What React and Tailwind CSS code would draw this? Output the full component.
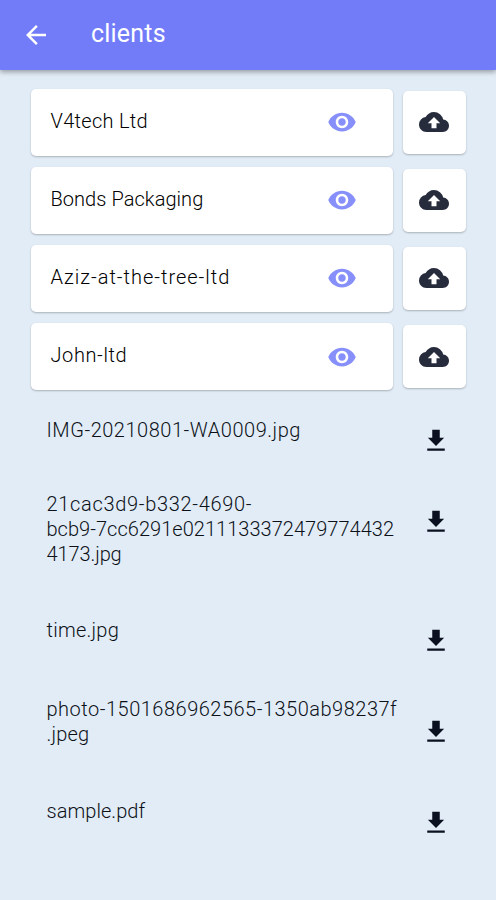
/**
 * Clients screen
 * Lists the clients with view / upload actions and the files of the open client
 */
import React from "react";
import { MdArrowBack, MdCloudUpload, MdVisibility } from "react-icons/md";

const clients = [
  { name: "V4tech Ltd", tracking: "tracking-[0.3px]" },
  { name: "Bonds Packaging", tracking: "tracking-[0.05px]" },
  { name: "Aziz-at-the-tree-ltd", tracking: "tracking-[0.98px]" },
  { name: "John-ltd", tracking: "tracking-[0.6px]" },
];

// Long file names are split over several lines
const files = [
  {
    id: 1,
    lines: [{ text: "IMG-20210801-WA0009.jpg", tracking: "tracking-[0.52px]" }],
    row: "h-[74px]",
    icon: "mt-[8px]",
  },
  {
    id: 2,
    lines: [
      { text: "21cac3d9-b332-4690-", tracking: "tracking-[0.68px]" },
      {
        text: "bcb9-7cc6291e0211133372479774432",
        tracking: "tracking-[0.03px]",
      },
      { text: "4173.jpg", tracking: "tracking-[-0.1px]" },
    ],
    row: "h-[126px]",
    icon: "mt-[15px]",
  },
  {
    id: 3,
    lines: [{ text: "time.jpg", tracking: "tracking-[0.25px]" }],
    row: "h-[79px]",
    icon: "mt-[7.5px]",
  },
  {
    id: 4,
    lines: [
      { text: "photo-1501686962565-1350ab98237f", tracking: "tracking-[0.5px]" },
      { text: ".jpeg", tracking: "tracking-[0.2px]" },
    ],
    row: "h-[102px]",
    icon: "mt-[19.5px]",
  },
  {
    id: 5,
    lines: [{ text: "sample.pdf", tracking: "tracking-[0.05px]" }],
    row: "h-[79px]",
    icon: "mt-[8.5px]",
  },
];

function DownloadIcon() {
  return (
    <svg width="30" height="30" viewBox="0 0 24 24" fill="currentColor">
      <path d="M5 19.8h14V18H5v1.8zM18.5 9.4H15V3H9v6.4H5.5L12 16z" />
    </svg>
  );
}

export default function App() {
  return (
    <div className="h-[900px] w-[496px] overflow-hidden bg-[#e2ecf6] font-['Roboto','Liberation_Sans',sans-serif]">
      {/* Header */}
      <header className="flex h-[70px] items-center bg-[#727cf9] pl-[21px] text-white shadow-[0_2px_5px_rgba(0,0,0,0.35)]">
        <button aria-label="Back">
          <MdArrowBack size={30} />
        </button>
        <h1 className="ml-[40px] -mt-[3px] text-[25px] leading-none tracking-[0.2px]">
          clients
        </h1>
      </header>

      {/* Clients */}
      <ul className="flex flex-col gap-[11px] pt-[18.5px] pl-[31px]">
        {clients.map((client) => (
          <li key={client.name} className="flex h-[67.2px] items-center gap-2.5">
            <div className="flex h-full w-[362px] items-center justify-between rounded-[5px] bg-white pr-[36px] pl-[19.5px] shadow-[0_1px_2px_rgba(0,0,0,0.25)]">
              <span
                className={`-mt-[2px] text-xl leading-[25px] font-light text-black ${client.tracking}`}
              >
                {client.name}
              </span>
              <button aria-label="View files">
                <MdVisibility size={30} className="text-[#8790fa]" />
              </button>
            </div>
            <button
              aria-label="Upload file"
              className="flex h-[63px] w-[63px] items-center justify-center rounded-[5px] bg-white pr-px shadow-[0_1px_2px_rgba(0,0,0,0.25)]"
            >
              <MdCloudUpload size={30} className="text-[#272c3d]" />
            </button>
          </li>
        ))}
      </ul>

      {/* Files */}
      <ul className="mt-[28px] flex flex-col pl-[46.5px]">
        {files.map((file) => (
          <li key={file.id} className={`flex items-start ${file.row}`}>
            <div className="flex w-[374px] flex-col text-xl leading-[25px] font-light text-[#0c1118]">
              {file.lines.map((line) => (
                <span
                  key={line.text}
                  className={`whitespace-nowrap ${line.tracking}`}
                >
                  {line.text}
                </span>
              ))}
            </div>
            <button
              aria-label="Download file"
              className={`text-[#0a1020] ${file.icon}`}
            >
              <DownloadIcon />
            </button>
          </li>
        ))}
      </ul>
    </div>
  );
}
